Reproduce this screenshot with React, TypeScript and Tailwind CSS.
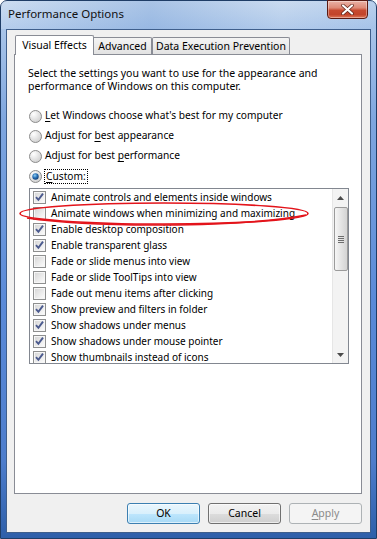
import React from "react";

function Radio({ checked }: { checked?: boolean }) {
  return (
    <svg width="13" height="13" viewBox="0 0 13 13" className="shrink-0">
      <defs>
        <radialGradient id="rbg" cx="35%" cy="30%" r="75%">
          <stop offset="0" stopColor="#ffffff" />
          <stop offset="1" stopColor="#cfcfcf" />
        </radialGradient>
        <radialGradient id="rdot" cx="40%" cy="35%" r="70%">
          <stop offset="0" stopColor="#8fd0f5" />
          <stop offset="0.5" stopColor="#2a72b8" />
          <stop offset="1" stopColor="#0d3a6e" />
        </radialGradient>
      </defs>
      <circle cx="6.5" cy="6.5" r="6" fill="url(#rbg)" stroke="#8d8d8d" strokeWidth="1" />
      {checked && <circle cx="6.5" cy="6.5" r="3.2" fill="url(#rdot)" />}
    </svg>
  );
}

function Check({ checked }: { checked?: boolean }) {
  return (
    <svg width="13" height="13" viewBox="0 0 13 13" className="shrink-0">
      <defs>
        <linearGradient id="cbg" x1="0" y1="0" x2="1" y2="1">
          <stop offset="0" stopColor="#d8d8d8" />
          <stop offset="1" stopColor="#fafafa" />
        </linearGradient>
      </defs>
      <rect x="0.5" y="0.5" width="12" height="12" fill="#f6f6f6" stroke="#8e8f8f" />
      <rect x="2" y="2" width="9" height="9" fill="url(#cbg)" />
      {checked && (
        <path d="M3 6.2 L5.4 8.8 L10 2.6" fill="none" stroke="#4b5a8e" strokeWidth="1.9" strokeLinejoin="miter" />
      )}
    </svg>
  );
}

const items: [string, boolean][] = [
  ["Animate controls and elements inside windows", true],
  ["Animate windows when minimizing and maximizing", false],
  ["Enable desktop composition", true],
  ["Enable transparent glass", true],
  ["Fade or slide menus into view", false],
  ["Fade or slide ToolTips into view", false],
  ["Fade out menu items after clicking", false],
  ["Show preview and filters in folder", true],
  ["Show shadows under menus", true],
  ["Show shadows under mouse pointer", true],
  ["Show thumbnails instead of icons", true],
];

export default function App() {
  return (
    <div className="w-[377px] h-[539px] bg-white font-['Noto_Sans',sans-serif] text-[10.5px] text-black relative overflow-hidden">
      <div className="relative w-[377px] h-[539px] rounded-t-[7px] border border-[#1f3d66] bg-[linear-gradient(to_bottom,#c4d7ee_0px,#a9c5e9_28px,#7ea6df_120px,#5a8ad8_300px,#4d7dcc_460px,#2d5ea8_539px)] flex flex-col">
        {/* title bar */}
        <div className="h-[28px] flex items-start bg-[linear-gradient(to_right,rgba(255,255,255,0.15),rgba(120,160,215,0.35)_40%,rgba(255,255,255,0.1)_75%,rgba(150,185,230,0.2))]">
          <div className="pl-[7px] pt-[4px] text-[11.5px] leading-[18px] text-[#111] whitespace-nowrap">Performance Options</div>
          <div className="ml-auto mr-[8px] mt-[-1px] w-[41px] h-[19px] rounded-b-[4px] border border-[#5a1a12] bg-[linear-gradient(to_bottom,#eab2a6_0%,#de8a77_40%,#c74a30_55%,#c2442a_80%,#e0785a_100%)] flex items-center justify-center shadow-[inset_0_0_0_1px_rgba(255,255,255,0.35)]">
            <svg width="13" height="11" viewBox="0 0 13 11">
              <path d="M2 1.5 L11 9.5 M11 1.5 L2 9.5" stroke="#5a2218" strokeWidth="3.6" strokeLinecap="round" />
              <path d="M2 1.5 L11 9.5 M11 1.5 L2 9.5" stroke="#ffffff" strokeWidth="2.2" strokeLinecap="round" />
            </svg>
          </div>
        </div>
        {/* client */}
        <div className="mx-[5px] mb-[5px] flex-1 border border-[#3f5f8c] bg-[#f0f0f0] flex flex-col pt-[5px] pl-[7px] pr-[8px]">
          {/* tabs */}
          <div className="relative z-10 h-[20px] mb-[-1px] flex items-end whitespace-nowrap">
            <div className="ml-[1px] w-[79px] h-[20px] bg-white border border-b-0 border-[#898c95] rounded-t-[2px] flex items-start justify-center pt-[2px] leading-[15px]">
              Visual Effects
            </div>
            <div className="mb-[1px] w-[58px] h-[17px] border border-l-0 border-b-0 border-[#898c95] rounded-tr-[2px] bg-[linear-gradient(to_bottom,#f4f4f4,#e2e2e2)] flex items-start justify-center leading-[16px]">
              Advanced
            </div>
            <div className="mb-[1px] w-[138px] h-[17px] border border-b-0 border-[#898c95] rounded-t-[2px] bg-[linear-gradient(to_bottom,#f4f4f4,#e2e2e2)] flex items-start justify-center leading-[16px]">
              Data Execution Prevention
            </div>
          </div>
          {/* panel */}
          <div className="h-[440px] border border-[#898c95] bg-white pl-[13px] pt-[12px] flex flex-col">
            <div className="leading-[13px] whitespace-nowrap">
              <div>Select the settings you want to use for the appearance and</div>
              <div>performance of Windows on this computer.</div>
            </div>
            <div className="mt-[13px] flex flex-col whitespace-nowrap text-[10.2px]">
              <div className="h-[20px] flex items-center ml-[1px] gap-[3px]">
                <Radio />
                <span><u className="underline-offset-[2px]">L</u>et Windows choose what's best for my computer</span>
              </div>
              <div className="h-[20px] flex items-center ml-[1px] gap-[3px]">
                <Radio />
                <span>Adjust for <u className="underline-offset-[2px]">b</u>est appearance</span>
              </div>
              <div className="h-[20px] flex items-center ml-[1px] gap-[3px]">
                <Radio />
                <span>Adjust for best <u className="underline-offset-[2px]">p</u>erformance</span>
              </div>
              <div className="h-[20px] flex items-center ml-[1px] gap-[3px]">
                <Radio checked />
                <span className="border border-dotted border-black leading-[13px] px-[1px] ml-[-1px]"><u className="underline-offset-[2px]">C</u>ustom:</span>
              </div>
            </div>
            {/* list */}
            <div className="mt-[2px] ml-[1px] w-[320px] h-[176px] border border-[#828790] bg-white flex overflow-hidden">
              <div className="flex-1 flex flex-col overflow-hidden text-[10px]">
                {items.map(([label, on]) => (
                  <div key={label} className="h-[16px] shrink-0 flex items-center pl-[3px] gap-[5px] whitespace-nowrap">
                    <Check checked={on} />
                    <span className="leading-[16px]">{label}</span>
                  </div>
                ))}
              </div>
              <div className="w-[16px] border-l border-[#e6e6e6] bg-[#f3f3f3] flex flex-col items-center">
                <div className="h-[17px] w-full flex items-center justify-center">
                  <svg width="7" height="4" viewBox="0 0 7 4"><path d="M0 4 L3.5 0 L7 4 Z" fill="#4a4a4a" /></svg>
                </div>
                <div className="mt-[1px] w-[14px] h-[64px] rounded-[2px] border border-[#9b9b9b] bg-[linear-gradient(to_right,#f6f6f6,#e4e4e4_50%,#d4d4d4)] flex flex-col items-center justify-center gap-[1px]">
                  <div className="w-[6px] h-[1px] bg-[#6d6d6d]" />
                  <div className="w-[6px] h-[1px] bg-[#6d6d6d]" />
                  <div className="w-[6px] h-[1px] bg-[#6d6d6d]" />
                  <div className="w-[6px] h-[1px] bg-[#6d6d6d]" />
                </div>
                <div className="flex-1" />
                <div className="h-[17px] w-full flex items-center justify-center">
                  <svg width="7" height="4" viewBox="0 0 7 4"><path d="M0 0 L3.5 4 L7 0 Z" fill="#4a4a4a" /></svg>
                </div>
              </div>
            </div>
          </div>
          {/* buttons */}
          <div className="mt-[9px] flex justify-end gap-[8px]">
            <div className="w-[73px] h-[21px] rounded-[3px] border border-[#3c7fb1] bg-[linear-gradient(to_bottom,#eaf6fd_0%,#d9f0fc_50%,#bee6fd_51%,#a7d9f5_100%)] shadow-[inset_0_0_0_1px_rgba(255,255,255,0.6)] flex items-center justify-center">
              OK
            </div>
            <div className="w-[73px] h-[21px] rounded-[3px] border border-[#707070] bg-[linear-gradient(to_bottom,#f2f2f2_0%,#ebebeb_50%,#dddddd_51%,#cfcfcf_100%)] shadow-[inset_0_0_0_1px_rgba(255,255,255,0.6)] flex items-center justify-center">
              Cancel
            </div>
            <div className="w-[73px] h-[21px] rounded-[3px] border border-[#adb2b5] bg-[#f4f4f4] text-[#8a8a8a] flex items-center justify-center">
              <span><u className="underline-offset-[2px]">A</u>pply</span>
            </div>
          </div>
        </div>
      </div>
      {/* red annotation ellipse */}
      <svg className="absolute left-[17px] top-[199px] pointer-events-none" width="296" height="30" viewBox="0 0 296 30">
        <ellipse cx="147" cy="14.5" rx="144" ry="10.5" fill="none" stroke="#e3141b" strokeWidth="1.6" />
        <path d="M10 19 Q 60 26.5 147 26 Q 240 25.5 289 16" fill="none" stroke="#e3141b" strokeWidth="1.6" />
      </svg>
    </div>
  );
}
